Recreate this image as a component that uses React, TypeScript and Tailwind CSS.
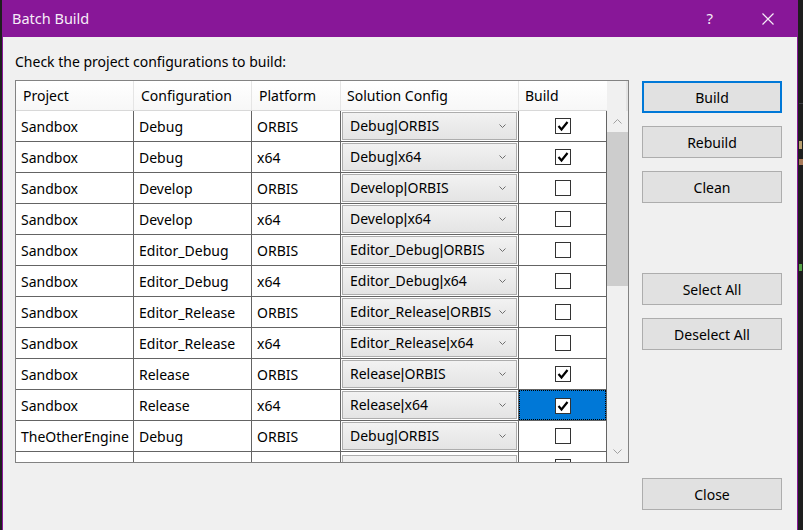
import React from 'react';

interface BuildRow {
    project: string;
    config: string;
    platform: string;
    build: boolean;
}

const rows: BuildRow[] = [
    { project: 'Sandbox', config: 'Debug', platform: 'ORBIS', build: true },
    { project: 'Sandbox', config: 'Debug', platform: 'x64', build: true },
    { project: 'Sandbox', config: 'Develop', platform: 'ORBIS', build: false },
    { project: 'Sandbox', config: 'Develop', platform: 'x64', build: false },
    { project: 'Sandbox', config: 'Editor_Debug', platform: 'ORBIS', build: false },
    { project: 'Sandbox', config: 'Editor_Debug', platform: 'x64', build: false },
    { project: 'Sandbox', config: 'Editor_Release', platform: 'ORBIS', build: false },
    { project: 'Sandbox', config: 'Editor_Release', platform: 'x64', build: false },
    { project: 'Sandbox', config: 'Release', platform: 'ORBIS', build: true },
    { project: 'Sandbox', config: 'Release', platform: 'x64', build: true },
    { project: 'TheOtherEngine', config: 'Debug', platform: 'ORBIS', build: false },
];

const SELECTED = 9;

const Check: React.FC<{ checked: boolean }> = ({ checked }) => (
    <div className="w-[16px] h-[16px] border border-[#333333] bg-white flex items-center justify-center">
        {checked && (
            <svg width="14" height="14" viewBox="0 0 14 14">
                <path d="M2.5 7 L5.5 10.5 L11.5 3" fill="none" stroke="#000" strokeWidth="2.2" />
            </svg>
        )}
    </div>
);

const Combo: React.FC<{ row?: BuildRow }> = ({ row }) => (
    <div className="ml-px w-[175px] h-[28px] border border-[#adadad] bg-gradient-to-b from-[#f2f2f2] to-[#e4e4e4] flex items-center justify-between pl-[7px] pr-[10px]">
        {row?.config ? (
            <span className="whitespace-nowrap">
                {row.config}
                <span className="font-['Liberation_Sans',sans-serif] text-[15px]">|</span>
                {row.platform}
            </span>
        ) : (
            <span />
        )}
        <svg width="7" height="4" viewBox="0 0 7 4">
            <path d="M0.5 0.5 L3.5 3.5 L6.5 0.5" fill="none" stroke="#6e6e6e" strokeWidth="1" />
        </svg>
    </div>
);

const Chevron: React.FC<{ up?: boolean }> = ({ up }) => (
    <svg width="9" height="5" viewBox="0 0 9 5">
        <path d={up ? 'M0.5 4.5 L4.5 0.5 L8.5 4.5' : 'M0.5 0.5 L4.5 4.5 L8.5 0.5'} fill="none" stroke="#a0a0a0" strokeWidth="1" />
    </svg>
);

const Button: React.FC<{ label: string; focused?: boolean; className?: string }> = ({ label, focused, className = '' }) => (
    <div
        className={`w-[140px] h-[32px] bg-[#e1e1e1] flex items-center justify-center text-black ${focused ? 'border-2 border-[#0078d7]' : 'border border-[#adadad]'
            } ${className}`}
    >
        {label}
    </div>
);

const GridRow: React.FC<{ row?: BuildRow; selected?: boolean; partial?: boolean }> = ({ row, selected, partial }) => (
    <div className="flex h-[31px] shrink-0 border-b border-[#646464] bg-white">
        <div className="w-[118px] border-r border-[#646464] flex items-center pl-[5px] pt-px whitespace-nowrap">{row?.project}</div>
        <div className="w-[118px] border-r border-[#646464] flex items-center pl-[5px] pt-px">{row?.config}</div>
        <div className="w-[89px] border-r border-[#646464] flex items-center pl-[5px] pt-px">{row?.platform}</div>
        <div className={`w-[178px] border-r border-[#646464] flex ${partial ? 'items-start pt-[3px]' : 'items-center'}`}>
            <Combo row={row} />
        </div>
        <div className={`w-[88px] border-r border-[#646464] ${selected ? 'bg-[#0078d7]' : ''}`}>
            <div className={`h-full flex justify-center pt-[7px] ${selected ? 'border border-dotted border-black' : ''}`}>
                <Check checked={row?.build ?? false} />
            </div>
        </div>
    </div>
);

export default function App() {
    return (
        <div className="flex w-[803px] h-[530px] overflow-hidden bg-[#1e1e1e] font-['Noto_Sans',sans-serif] text-[14px] text-black">
            <div className="w-[2px] shrink-0" />

            <div className="w-[796px] shrink-0 flex flex-col bg-[#f0f0f0] border-x border-[#881798]">
                <div className="h-[37px] shrink-0 bg-[#881798] flex items-center pl-[9px] text-[#f6ecf7]">
                    <span className="text-[14.5px]">Batch Build</span>
                    <span className="ml-auto mr-[49px] text-[15px]">?</span>
                    <svg className="mr-[23px]" width="12" height="12" viewBox="0 0 12 12">
                        <path d="M0.5 0.5 L11.5 11.5 M11.5 0.5 L0.5 11.5" stroke="#f6ecf7" strokeWidth="1.2" />
                    </svg>
                </div>

                <div className="flex flex-1 pl-[12px]">
                    <div className="flex flex-col pt-[15px]">
                        <div className="leading-[20px]">Check the project configurations to build:</div>

                        <div className="mt-[8px] w-[614px] h-[383px] border border-[#828282] flex">
                            <div className="w-[591px] flex flex-col">
                                <div className="flex h-[30px] shrink-0 border-b border-[#d8d8d8] bg-gradient-to-b from-white to-[#f7f7f7]">
                                    <div className="w-[118px] border-r border-[#e5e5e5] flex items-center pl-[7px]">Project</div>
                                    <div className="w-[118px] border-r border-[#e5e5e5] flex items-center pl-[7px]">Configuration</div>
                                    <div className="w-[89px] border-r border-[#e5e5e5] flex items-center pl-[7px]">Platform</div>
                                    <div className="w-[178px] border-r border-[#e5e5e5] flex items-center pl-[6px]">Solution Config</div>
                                    <div className="w-[88px] flex items-center pl-[6px]">Build</div>
                                </div>
                                <div className="flex-1 flex flex-col overflow-hidden">
                                    {rows.map((r, i) => (
                                        <GridRow key={i} row={r} selected={i === SELECTED} />
                                    ))}
                                    <GridRow partial row={{ project: '', config: '', platform: '', build: true }} />
                                </div>
                            </div>

                            <div className="w-[21px] flex flex-col bg-[#f0f0f0]">
                                <div className="h-[30px] shrink-0 border-r-2 border-[#e3e3e3]" />
                                <div className="h-[21px] shrink-0 flex items-center justify-center">
                                    <Chevron up />
                                </div>
                                <div className="h-[154px] shrink-0 bg-[#cdcdcd]" />
                                <div className="flex-1" />
                                <div className="h-[21px] shrink-0 flex items-center justify-center">
                                    <Chevron />
                                </div>
                            </div>
                        </div>
                    </div>

                    <div className="ml-[13px] flex flex-col pt-[44px]">
                        <Button label="Build" focused />
                        <Button label="Rebuild" className="mt-[13px]" />
                        <Button label="Clean" className="mt-[13px]" />
                        <Button label="Select All" className="mt-[70px]" />
                        <Button label="Deselect All" className="mt-[13px]" />
                        <Button label="Close" className="mt-[128px]" />
                    </div>
                </div>
            </div>

            {/* sliver of the editor behind the dialog */}
            <div className="flex-1 flex flex-col overflow-hidden pl-px">
                <div className="h-[103px] shrink-0" />
                <div className="h-px shrink-0 bg-[#3f3f46]" />
                <div className="h-[37px] shrink-0" />
                <div className="w-[3px] h-[8px] shrink-0 bg-[#b8a070]" />
                <div className="h-[10px] shrink-0" />
                <div className="w-[4px] h-[6px] shrink-0 bg-[#a87a5a]" />
                <div className="h-[99px] shrink-0" />
                <div className="w-[3px] h-[7px] shrink-0 bg-[#57a64a]" />
            </div>
        </div>
    );
}
